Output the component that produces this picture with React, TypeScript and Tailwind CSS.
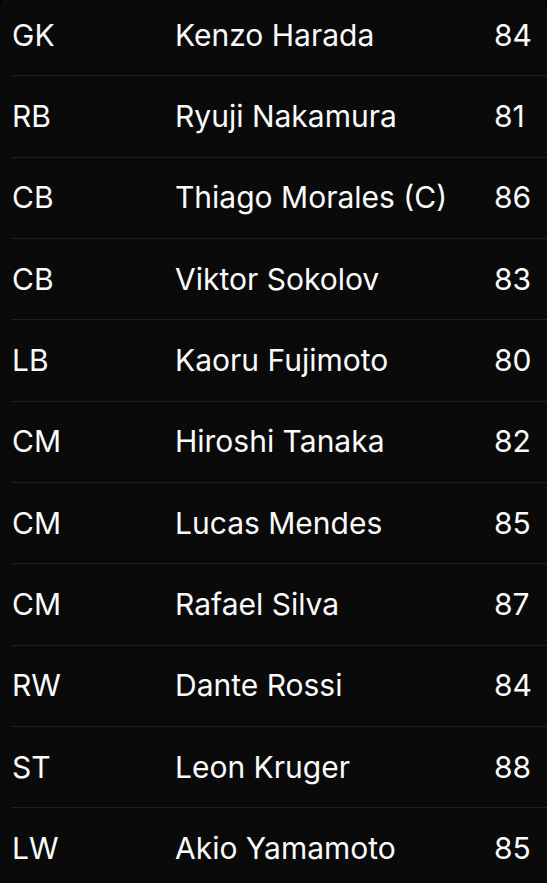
const players = [
  { pos: 'GK', name: 'Kenzo Harada', rating: 84 },
  { pos: 'RB', name: 'Ryuji Nakamura', rating: 81 },
  { pos: 'CB', name: 'Thiago Morales (C)', rating: 86 },
  { pos: 'CB', name: 'Viktor Sokolov', rating: 83 },
  { pos: 'LB', name: 'Kaoru Fujimoto', rating: 80 },
  { pos: 'CM', name: 'Hiroshi Tanaka', rating: 82 },
  { pos: 'CM', name: 'Lucas Mendes', rating: 85 },
  { pos: 'CM', name: 'Rafael Silva', rating: 87 },
  { pos: 'RW', name: 'Dante Rossi', rating: 84 },
  { pos: 'ST', name: 'Leon Kruger', rating: 88 },
  { pos: 'LW', name: 'Akio Yamamoto', rating: 85 },
];

export default function App() {
  return (
    <div className="h-[883px] overflow-hidden bg-black font-['Inter',sans-serif] text-[#fafafa]">
      {/* Squad list, scrolled a few px down */}
      <div className="-mt-[5px] rounded-xl bg-[#0a0a0a] pl-3">
        {players.map((p, i) => (
          <div
            key={i}
            className={`flex h-[81.33px] items-center text-[30px] ${
              i < players.length - 1 ? 'border-b border-[#1f1f1f]' : ''
            }`}
          >
            <div className="w-[163px] shrink-0">{p.pos}</div>
            <div className="flex-1">{p.name}</div>
            <div className="w-[53px] shrink-0">{p.rating}</div>
          </div>
        ))}
      </div>
    </div>
  );
}
